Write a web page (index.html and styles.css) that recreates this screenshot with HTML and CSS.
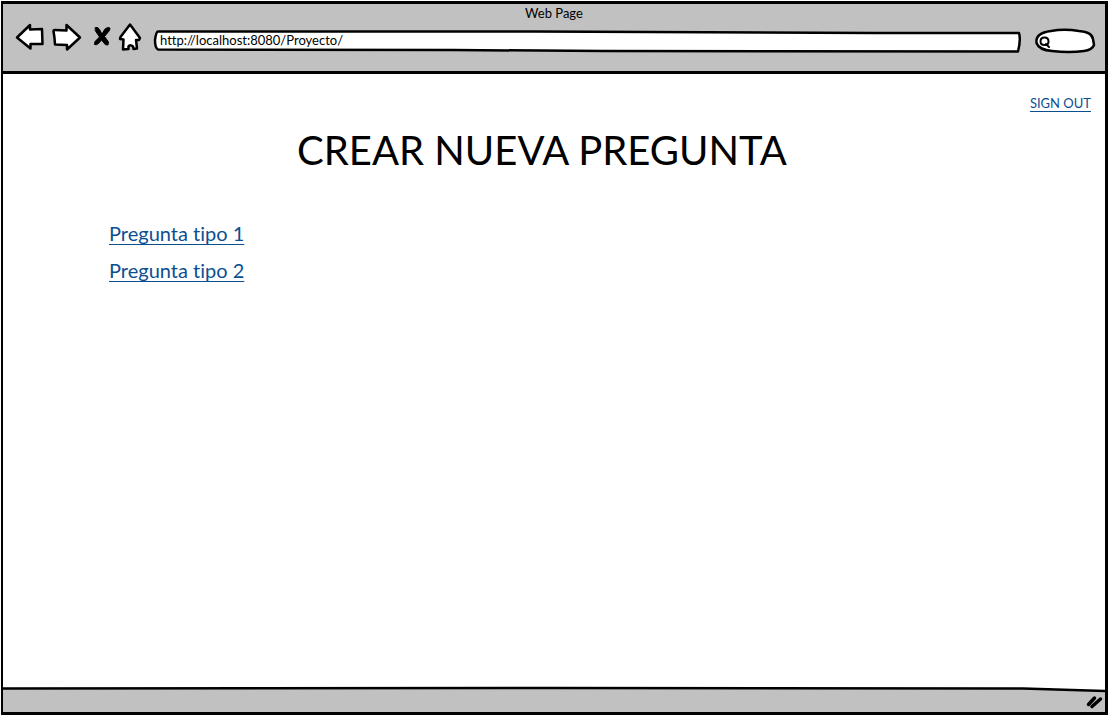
FILE: index.html
```html
<!DOCTYPE html>
<html lang="es">
<head>
<meta charset="utf-8">
<meta name="viewport" content="width=device-width, initial-scale=1">
<title>Web Page</title>
<link rel="stylesheet" href="styles.css">
</head>
<body>
<div class="browser">
  <header class="chrome">
    <div class="window-title">Web Page</div>
    <div class="toolbar">
      <nav class="controls" aria-label="Navegador">
        <button class="control" type="button" aria-label="Atrás">
          <svg width="30" height="30" viewBox="0 0 30 30"><path d="M2 15.500 15 3V7.500L27 7 27.500 22 15.500 22V26.500Z"/></svg>
        </button>
        <button class="control" type="button" aria-label="Adelante">
          <svg width="30" height="30" viewBox="0 0 30 30"><path d="M1.500 9Q1.500 8 3 8L14.500 8.500V3L28 15.500 15 27.500V23L3 22.500 2.500 16Z"/></svg>
        </button>
        <button class="control stop" type="button" aria-label="Detener">
          <svg width="18" height="30" viewBox="0 0 18 30"><path class="solid" d="M2.500 5.500Q5 4.500 6.500 7.500L9 12 12 7Q14.500 4.500 17 6L16.500 8.500 11.500 14.500 15.500 20 15 23Q12 23.500 10.500 20.500L8.500 18 5.500 21.500Q3 23.500 1.500 22.500L2 19.500 6.500 15 2.500 9Z"/></svg>
        </button>
        <button class="control" type="button" aria-label="Inicio">
          <svg width="24" height="30" viewBox="0 0 24 30"><path d="M12 2.500 22 16 21 18H18L19 26.500 15.500 27 15 24.500Q12 22 10.500 24.500V27L5 27.500 5.500 17.500 2 17 2.500 15Z"/></svg>
        </button>
      </nav>
      <div class="field address">
        <svg class="outline" viewBox="0 0 868 22" preserveAspectRatio="none" aria-hidden="true"><path d="M5 1.500 380 1.500 720 3 866 3Q868 10 865 21.500L450 21 300 20 5 19.500Q2 18 2 10 3 2 5 1.500Z"/></svg>
        <input class="address-input" type="text" aria-label="Dirección" value="http://localhost:8080/Proyecto/">
      </div>
      <div class="field search">
        <svg class="outline" viewBox="0 0 62 26" preserveAspectRatio="none" aria-hidden="true"><path d="M17 3Q30 .5 45 3 58 4 59 11L60 17Q58 22 50 23 35 25 18 23 5 22 2.500 15 1 5 17 3Z"/></svg>
        <svg class="lens" width="12" height="14" viewBox="0 0 12 14" aria-hidden="true"><path d="M9.500 5.500C9.500 8 8 9 5.500 9 3 9 1.500 8 1.500 5.500 1.500 3 3 1.500 5.500 1.500S9.500 3 9.500 5.500ZM7 8 10 11"/></svg>
        <input class="search-input" type="search" aria-label="Buscar">
      </div>
    </div>
  </header>
  <main class="page">
    <div class="session"><a class="link" href="#">SIGN OUT</a></div>
    <h1 class="heading">CREAR NUEVA PREGUNTA</h1>
    <ul class="types">
      <li><a class="link" href="#">Pregunta tipo 1</a></li>
      <li><a class="link" href="#">Pregunta tipo 2</a></li>
    </ul>
  </main>
  <footer class="status">
    <svg class="surface" viewBox="0 0 1102 25" preserveAspectRatio="none" aria-hidden="true"><path class="fill" d="M0 1.500 550 1 1020 1.500 1102 4V25H0Z"/><path class="edge" d="M0 1.500 550 1 1020 1.500 1102 4"/></svg>
    <svg class="grip" width="18" height="16" viewBox="0 0 18 16" aria-hidden="true"><path d="M1.500 10.500 7.500 4M5 12.500 13.500 5"/></svg>
  </footer>
</div>
</body>
</html>
```
FILE: styles.css
```css
* {
  box-sizing: border-box;
}

body {
  margin: 0;
  padding: 1px 0 1px 1px;
  background: #fff;
  color: #000;
  font-family: Lato, "Noto Sans", sans-serif;
  font-variant-ligatures: none;
}

.browser {
  display: flex;
  flex-direction: column;
  min-height: calc(100vh - 2px);
  border: 3px solid #000;
  border-left-width: 2px;
}

.chrome {
  display: flex;
  flex-direction: column;
  height: 70px;
  background: #c1c1c1;
  border-bottom: 3px solid #000;
}

.window-title {
  padding-top: 2px;
  font-size: 13px;
  line-height: 14px;
  text-align: center;
}

.toolbar {
  display: flex;
  align-items: center;
  padding: 0 9px 0 12px;
}

.controls {
  display: flex;
  align-items: center;
  gap: 7px;
  margin-right: 11px;
}

.control {
  display: block;
  padding: 0;
  border: 0;
  background: none;
}

.stop {
  margin-left: 4px;
}

svg {
  display: block;
  overflow: visible;
  fill: #fff;
  stroke: #000;
  stroke-width: 2.5;
  stroke-linejoin: round;
  stroke-linecap: round;
}

.solid {
  fill: #000;
  stroke-width: 1;
}

.field {
  position: relative;
}

.address {
  flex: 1;
  height: 22px;
  margin-top: 8px;
}

.search {
  width: 62px;
  height: 26px;
  margin: 8px 0 0 13px;
}

.outline,
.surface {
  position: absolute;
  inset: 0;
  width: 100%;
  height: 100%;
}

.outline path,
.surface path {
  vector-effect: non-scaling-stroke;
}

.lens {
  position: absolute;
  top: 8px;
  left: 5px;
  stroke-width: 2;
}

input {
  position: relative;
  display: block;
  width: 100%;
  height: 100%;
  padding: 0 7px 2px;
  border: 0;
  outline: 0;
  background: none;
  color: #000;
  font: 13px/20px Lato, "Noto Sans", sans-serif;
  font-variant-ligatures: none;
}

.search-input {
  padding-left: 18px;
}

.page {
  flex: 1;
  padding: 21px 14px;
}

.session {
  font-size: 13px;
  line-height: 16px;
  text-align: right;
}

.link {
  color: #0b4f91;
  text-decoration: underline;
  text-decoration-thickness: 1px;
  text-underline-offset: 3px;
  text-decoration-skip-ink: none;
}

.heading {
  margin: 15px 24px 0 0;
  font-size: 40px;
  font-weight: 400;
  line-height: 48px;
  text-align: center;
}

.types {
  display: flex;
  flex-direction: column;
  gap: 13px;
  margin: 47px 0 0;
  padding: 0 0 0 92px;
  list-style: none;
  font-size: 20px;
  line-height: 24px;
}

.status {
  position: relative;
  display: flex;
  justify-content: flex-end;
  align-items: center;
  height: 25px;
}

.fill {
  fill: #c1c1c1;
  stroke: none;
}

.edge {
  fill: none;
}

.grip {
  position: relative;
  margin-top: 4px;
  stroke-width: 3.5;
}
```
